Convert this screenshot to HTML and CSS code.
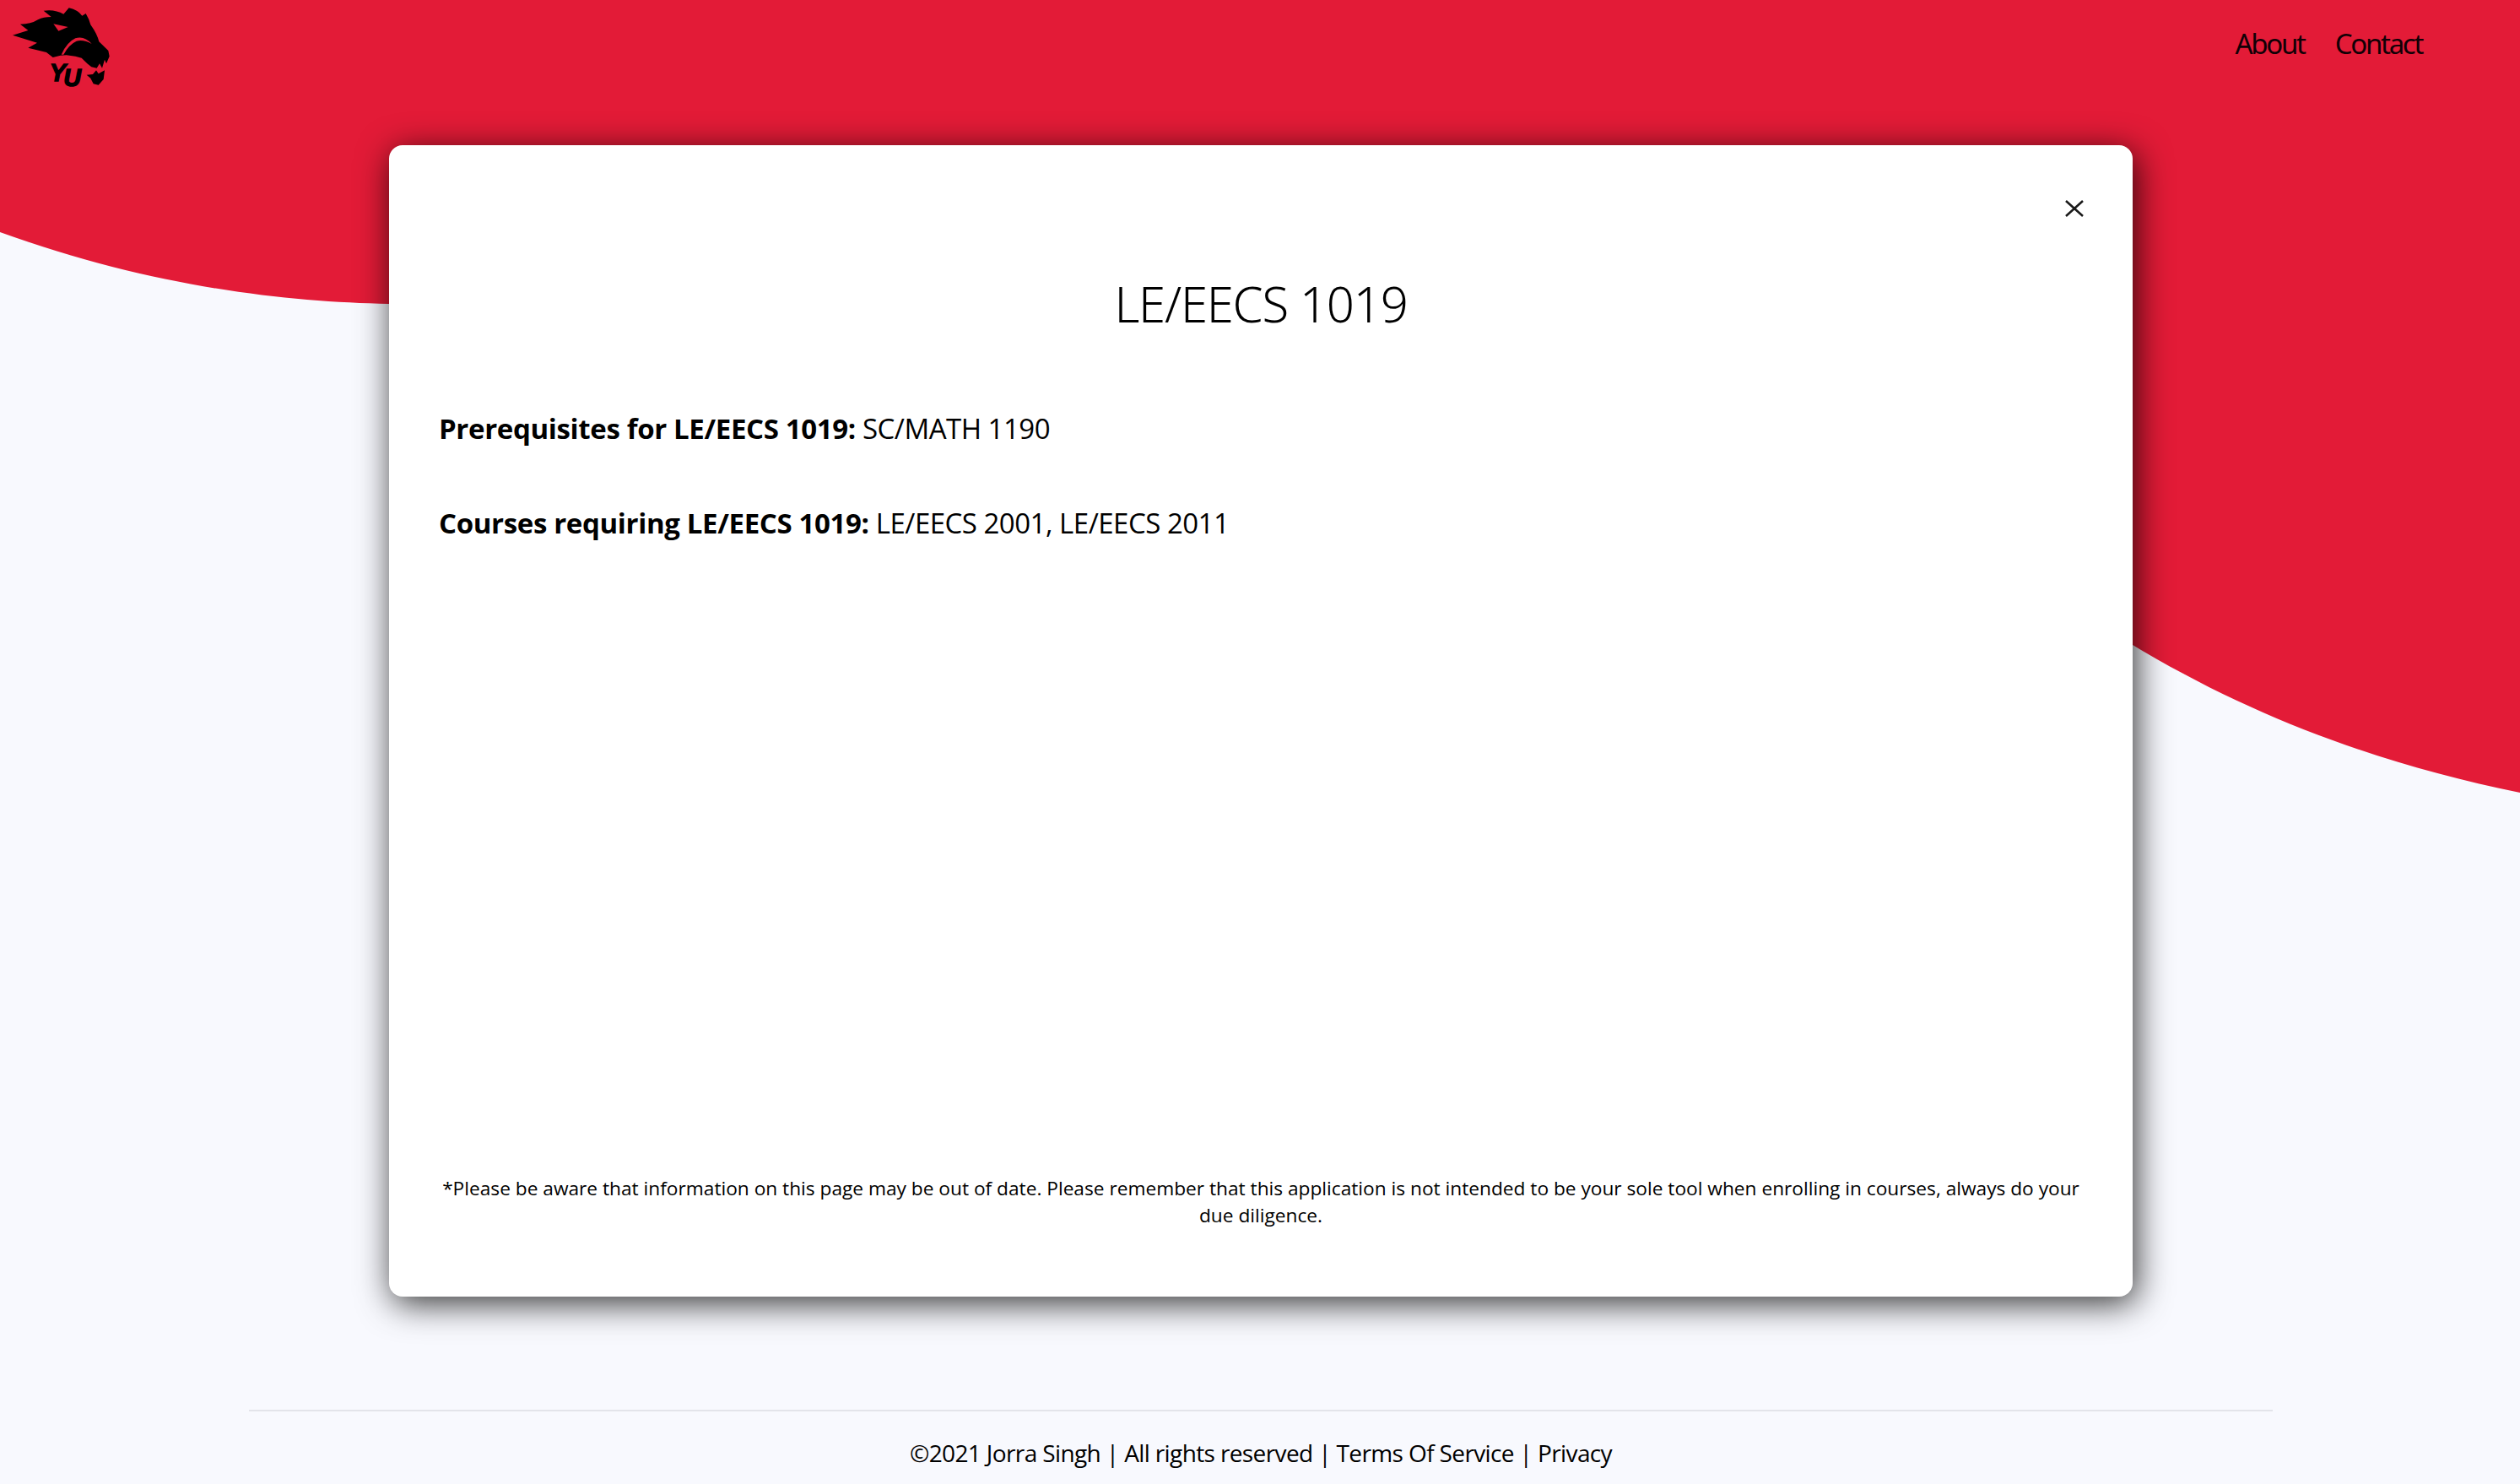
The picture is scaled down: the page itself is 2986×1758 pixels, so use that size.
FILE: index.html
```html
<!DOCTYPE html>
<html lang="en">
<head>
<meta charset="utf-8">
<title>LE/EECS 1019</title>
<link rel="stylesheet" href="styles.css">
</head>
<body>
<svg class="wave" viewBox="0 0 2986 1758" aria-hidden="true"><path d="M0 0H2986V939C2820 905 2670 850 2527 764L461 360C340 358 180 340 0 275Z"/></svg>
<div class="page">
  <header class="topbar">
    <svg class="logo" viewBox="0 0 480 360" role="img" aria-label="YU lions logo">
      <path d="M45 125L100 108L72 86Q110 86 135 70Q155 60 182 60L155 38Q195 32 226 50L245 28Q278 36 292 56L305 48Q318 70 322 88Q345 120 352 148L385 180L389 200L378 226L372 212L363 242L354 226L344 242L325 238L310 226L290 206L268 200L236 196L215 197L188 204L165 186L100 170L132 152Z"/>
      <path d="M308 266L330 264L342 250L350 262L372 250L368 282L350 302L332 298L322 278Z"/>
      <path class="eye" d="M190 85L242 96L208 110Z"/>
      <path class="eye" d="M218 194Q238 150 268 136Q300 126 326 156Q298 140 272 146Q245 158 226 194Z"/>
      <text class="logo-text" x="176" y="288">Y</text>
      <text class="logo-text" x="226" y="305">U</text>
    </svg>
    <nav class="nav"><a>About</a><a>Contact</a></nav>
  </header>
  <main class="card">
    <svg class="close" viewBox="0 0 22 20" aria-label="Close"><path d="M1 1L21 19M21 1L1 19"/></svg>
    <h1 class="title">LE/EECS 1019</h1>
    <p class="line"><strong>Prerequisites for LE/EECS 1019:</strong> SC/MATH 1190</p>
    <p class="line"><strong>Courses requiring LE/EECS 1019:</strong> LE/EECS 2001, LE/EECS 2011</p>
    <p class="note">*Please be aware that information on this page may be out of date. Please remember that this application is not intended to be your sole tool when enrolling in courses, always do your due diligence.</p>
  </main>
  <footer class="footer">©2021 Jorra Singh | All rights reserved | Terms Of Service | Privacy</footer>
</div>
</body>
</html>
```
FILE: styles.css
```css
html, body { margin: 0; padding: 0; }
body {
  position: relative;
  height: 1758px;
  overflow: hidden;
  background: #f8f9fe;
  color: #000;
  font-family: "Open Sans", "Noto Sans", sans-serif;
}
.wave { position: absolute; left: 0; top: 0; width: 2986px; height: 1758px; }
.wave path { fill: #e31b37; }
.page { position: relative; display: flex; flex-direction: column; align-items: center; padding-left: 2px; }
.topbar { width: 100%; height: 172px; display: flex; justify-content: space-between; align-items: flex-start; box-sizing: border-box; padding-right: 116px; }
.logo { width: 160px; height: 120px; display: block; margin-left: -2px; }
.logo path { fill: #000; }
.logo .eye { fill: #e31b37; }
.logo-text { font-family: "Liberation Sans", sans-serif; font-weight: 700; font-style: italic; font-size: 86px; fill: #000; stroke: #000; stroke-width: 4px; }
.nav { display: flex; gap: 36px; padding-top: 29px; font-family: "Noto Sans", sans-serif; font-size: 33px; line-height: 45px; letter-spacing: -2.3px; font-weight: 400; color: #120006; }
.card {
  position: relative;
  box-sizing: border-box;
  width: 2066px;
  height: 1364px;
  background: #fff;
  border-radius: 16px;
  box-shadow: 4px 8px 40px rgba(0, 0, 0, .8);
  padding: 148px 58px 0;
  display: flex;
  flex-direction: column;
}
.close { position: absolute; left: 1986px; top: 65px; width: 22px; height: 20px; }
.close path { fill: none; stroke: #1a1a1a; stroke-width: 2.6; }
.title { margin: 0 0 82px; text-align: center; font-family: "Noto Sans", sans-serif; font-weight: 300; font-size: 58px; letter-spacing: -1.2px; line-height: 80px; }
.line { margin: 0 0 60px 1px; font-size: 33px; line-height: 52px; font-weight: 400; letter-spacing: -.5px; }
.line strong { font-weight: 700; letter-spacing: -.35px; }
.note { margin: auto 0 80px; text-align: center; font-size: 22.7px; line-height: 32px; }
.footer { box-sizing: border-box; width: 2398px; margin-top: 134px; border-top: 2px solid #e3e4ea; padding-top: 25px; text-align: center; font-size: 28px; line-height: 48px; font-weight: 400; letter-spacing: -.62px; }
```
